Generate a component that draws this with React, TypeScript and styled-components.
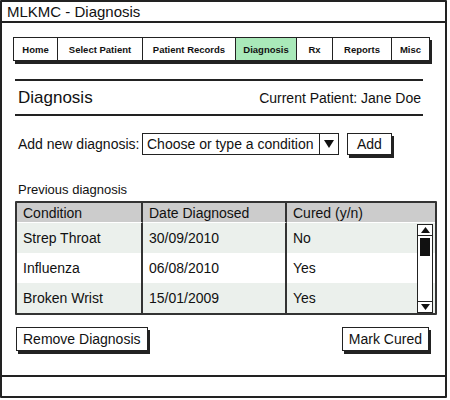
import React from "react";
import styled, { createGlobalStyle } from "styled-components";

const GlobalStyle = createGlobalStyle`
    body {
        margin: 0;
        background: #ffffff;
        font-family: "Liberation Sans", "DejaVu Sans", sans-serif;
        color: #111111;
    }
`;

const tabs = [
    { label: "Home", width: 45 },
    { label: "Select Patient", width: 85 },
    { label: "Patient Records", width: 93 },
    { label: "Diagnosis", width: 61 },
    { label: "Rx", width: 36 },
    { label: "Reports", width: 59 },
    { label: "Misc", width: 38 },
];

const rows = [
    { condition: "Strep Throat", date: "30/09/2010", cured: "No" },
    { condition: "Influenza", date: "06/08/2010", cured: "Yes" },
    { condition: "Broken Wrist", date: "15/01/2009", cured: "Yes" },
];

export default function App() {
    const selected = "Diagnosis";

    return (
        <>
            <GlobalStyle />
            <Window>
                <TitleBar>MLKMC - Diagnosis</TitleBar>
                <Content>
                    <TabBar>
                        {tabs.map((t) => (
                            <Tab
                                key={t.label}
                                width={t.width}
                                active={t.label === selected}
                            >
                                {t.label}
                            </Tab>
                        ))}
                    </TabBar>

                    <HeaderRow>
                        <Heading>Diagnosis</Heading>
                        <PatientLabel>Current Patient: Jane Doe</PatientLabel>
                    </HeaderRow>

                    <AddRow>
                        <FieldLabel>Add new diagnosis:</FieldLabel>
                        <Combo>
                            <ComboText>Choose or type a condition</ComboText>
                            <ComboArrow>
                                <svg width="10" height="8" viewBox="0 0 10 8">
                                    <path d="M0 0 L10 0 L5 8 Z" fill="#111" />
                                </svg>
                            </ComboArrow>
                        </Combo>
                        <Button>Add</Button>
                    </AddRow>

                    <SectionLabel>Previous diagnosis</SectionLabel>
                    <Table>
                        <HeadCell>Condition</HeadCell>
                        <HeadCell>Date Diagnosed</HeadCell>
                        <HeadCell last>Cured (y/n)</HeadCell>
                        {rows.map((r, i) => (
                            <React.Fragment key={r.condition}>
                                <Cell striped={i % 2 === 0}>{r.condition}</Cell>
                                <Cell striped={i % 2 === 0}>{r.date}</Cell>
                                <Cell striped={i % 2 === 0} last>
                                    {r.cured}
                                </Cell>
                            </React.Fragment>
                        ))}
                        <Scrollbar>
                            <ScrollArrow>
                                <svg width="9" height="6" viewBox="0 0 9 6">
                                    <path d="M0 6 L9 6 L4.5 0 Z" fill="#111" />
                                </svg>
                            </ScrollArrow>
                            <ScrollTrack>
                                <Thumb />
                            </ScrollTrack>
                            <ScrollArrow bottom>
                                <svg width="9" height="6" viewBox="0 0 9 6">
                                    <path d="M0 0 L9 0 L4.5 6 Z" fill="#111" />
                                </svg>
                            </ScrollArrow>
                        </Scrollbar>
                    </Table>

                    <ButtonRow>
                        <Button tall>Remove Diagnosis</Button>
                        <Button tall>Mark Cured</Button>
                    </ButtonRow>
                </Content>
                <StatusBar />
            </Window>
        </>
    );
}

const Window = styled.div`
    display: flex;
    flex-direction: column;
    width: 443px;
    height: 394px;
    border: 2px solid #222222;
    border-radius: 1px;
`;

const TitleBar = styled.div`
    height: 19px;
    line-height: 19px;
    padding-left: 5px;
    border-bottom: 2px solid #222222;
    font-size: 15px;
`;

const Content = styled.div`
    flex: 1;
    display: flex;
    flex-direction: column;
    padding: 14px 10px 0 11px;
`;

const TabBar = styled.div`
    display: flex;
    align-self: flex-start;
    box-shadow: 2px 3px 0 #222222;
`;

type TabProps = {
    width: number;
    active?: boolean;
};

const Tab = styled.div<TabProps>`
    width: ${(p) => p.width}px;
    height: 24px;
    display: flex;
    align-items: center;
    justify-content: center;
    box-sizing: border-box;
    border: 1.5px solid #222222;
    border-left-width: 0;
    background: ${(p) => (p.active ? "#a9e9b9" : "#ffffff")};
    font-size: 9.5px;
    font-weight: bold;
    &:first-child {
        border-left-width: 1.5px;
    }
`;

const HeaderRow = styled.div`
    display: flex;
    align-items: center;
    justify-content: space-between;
    height: 33px;
    margin: 18px 12px 0 2px;
    padding: 0 2px 0 3px;
    border-top: 2px solid #222222;
    border-bottom: 2px solid #222222;
`;

const Heading = styled.div`
    font-size: 17px;
`;

const PatientLabel = styled.div`
    font-size: 14px;
`;

const AddRow = styled.div`
    display: flex;
    align-items: center;
    margin: 17px 0 0 5px;
`;

const FieldLabel = styled.div`
    font-size: 14px;
    width: 124px;
`;

const Combo = styled.div`
    display: flex;
    width: 197px;
    height: 22px;
    box-sizing: border-box;
    border: 1.5px solid #222222;
`;

const ComboText = styled.div`
    flex: 1;
    display: flex;
    align-items: center;
    padding-left: 4px;
    font-size: 14px;
    white-space: nowrap;
    overflow: hidden;
`;

const ComboArrow = styled.div`
    width: 18px;
    display: flex;
    align-items: center;
    justify-content: center;
    border-left: 1.5px solid #222222;
`;

type ButtonProps = {
    tall?: boolean;
};

const Button = styled.div<ButtonProps>`
    display: inline-flex;
    align-items: center;
    justify-content: center;
    box-sizing: border-box;
    height: ${(p) => (p.tall ? 24 : 22)}px;
    padding: 0 9px;
    margin-left: 8px;
    border: 1.5px solid #222222;
    box-shadow: 2px 3px 0 #222222;
    font-size: 14px;
    background: #ffffff;
`;

const SectionLabel = styled.div`
    font-size: 13px;
    margin: 27px 0 4px 5px;
`;

const Table = styled.div`
    position: relative;
    display: grid;
    grid-template-columns: 126px 144px 1fr;
    grid-template-rows: 20px 30px 30px 30px;
    width: 418px;
    margin-left: 2px;
    border: 2px solid #333333;
    border-radius: 1px;
    font-size: 14px;
`;

type CellProps = {
    last?: boolean;
    striped?: boolean;
};

const HeadCell = styled.div<CellProps>`
    display: flex;
    align-items: center;
    padding-left: 6px;
    background: #cccccc;
    border-right: ${(p) => (p.last ? "none" : "2px solid #333333")};
    border-bottom: 1px solid #ffffff;
`;

const Cell = styled.div<CellProps>`
    display: flex;
    align-items: center;
    padding-left: 6px;
    background: ${(p) => (p.striped ? "#ebf0ec" : "#ffffff")};
    border-right: ${(p) => (p.last ? "none" : "2px solid #333333")};
`;

const Scrollbar = styled.div`
    position: absolute;
    right: 2px;
    top: 21px;
    bottom: 0;
    width: 14px;
    display: flex;
    flex-direction: column;
    border: 1.5px solid #222222;
    background: #ffffff;
`;

const ScrollArrow = styled.div<{ bottom?: boolean }>`
    height: 10px;
    display: flex;
    align-items: center;
    justify-content: center;
    border-bottom: ${(p) => (p.bottom ? "none" : "1px solid #222222")};
    border-top: ${(p) => (p.bottom ? "1px solid #222222" : "none")};
`;

const ScrollTrack = styled.div`
    flex: 1;
    padding: 2px 2px;
`;

const Thumb = styled.div`
    height: 18px;
    background: #111111;
`;

const ButtonRow = styled.div`
    display: flex;
    justify-content: space-between;
    margin: 12px 6px 0 0;
    & > div {
        margin-left: 3px;
        padding: 0 6px;
    }
`;

const StatusBar = styled.div`
    height: 19px;
    border-top: 2px solid #222222;
`;
